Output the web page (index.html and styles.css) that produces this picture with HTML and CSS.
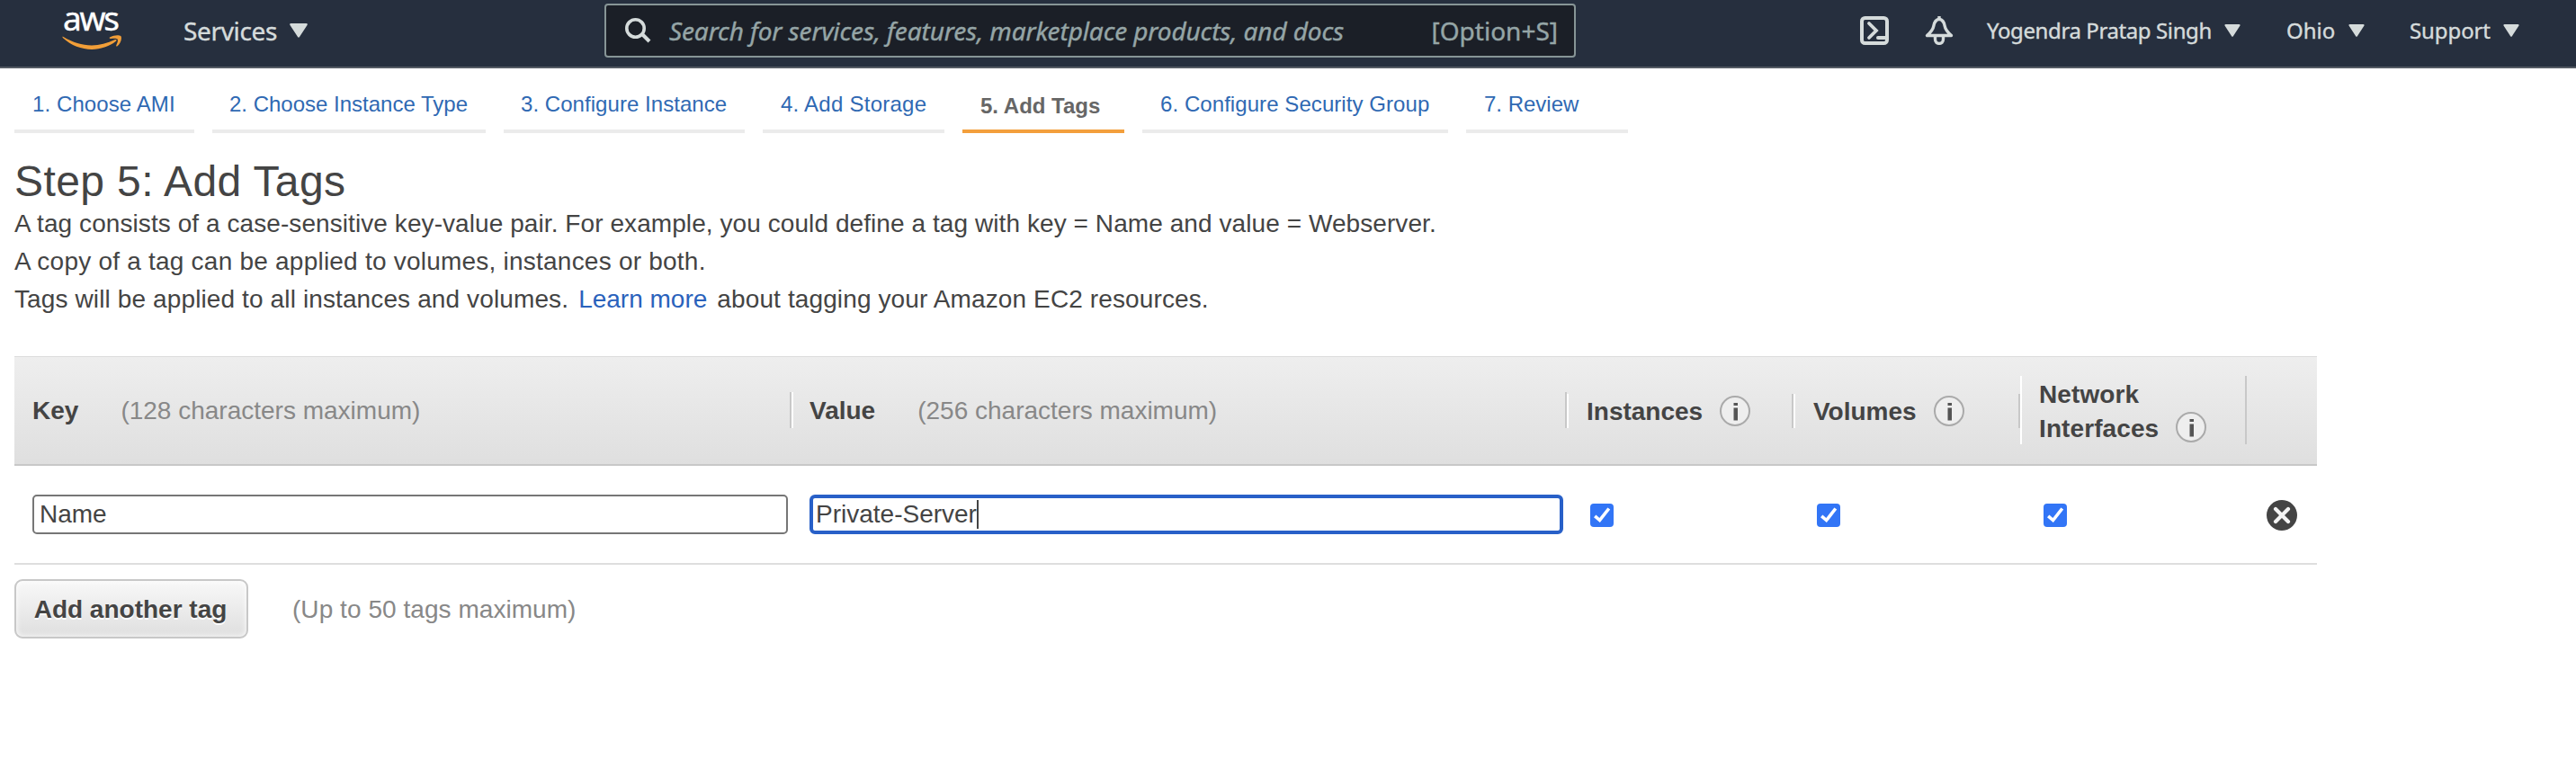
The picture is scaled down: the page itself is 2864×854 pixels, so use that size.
FILE: index.html
```html
<!DOCTYPE html>
<html lang="en">
<head>
<meta charset="utf-8">
<title>Step 5: Add Tags</title>
<link rel="stylesheet" href="styles.css">
</head>
<body>
<header class="topbar">
  <div class="logo">
    <span class="logo-text">aws</span>
    <svg class="logo-smile" width="68" height="18" viewBox="0 0 68 18"><path d="M1.500 2Q0 .8.800 3C18 19 43 20 60 6.800Q61.500 4.500 59 5C39 14.800 20 13 1.500 2Z" fill="#f19e38"/><path d="M53 2.600C58-.400 63.500-.200 65.500 1.200C67 4.500 64.500 10 61.200 12.500Q59.800 13 60.300 11.300C61.500 8.500 62.500 6 61.600 4.600C60 3.200 57 3.800 54 4Q52 3.800 53 2.600Z" fill="#f19e38"/></svg>
  </div>
  <div class="nav-item services"><span class="t services-text">Services</span><svg class="caret-lg" width="20" height="16" viewBox="0 0 20 16"><path d="M1.500 0H18.500Q20.500.300 19.500 2L11 15Q10 16.600 9 15L.500 2Q-.500.300 1.500 0Z" fill="#d5dbdb"/></svg></div>
  <div class="search">
    <svg class="search-icon" width="29" height="28" viewBox="0 0 29 28"><circle cx="11.500" cy="11.500" r="9.700" fill="none" stroke="#d5dbdb" stroke-width="3.600"/><path d="M18.500 17.500L27 26" stroke="#d5dbdb" stroke-width="4"/></svg>
    <span class="t placeholder">Search for services, features, marketplace products, and docs</span>
    <span class="t shortcut">[Option+S]</span>
  </div>
  <svg class="shell-icon" width="32" height="32" viewBox="0 0 32 32" fill="none" stroke="#d5dbdb" stroke-width="4"><rect x="2" y="2" width="28" height="28" rx="3.500"/><path d="M10 8L18 16L10 24" stroke-linecap="round" stroke-width="3.800"/><path d="M20 24H29" stroke-linecap="round"/></svg>
  <svg class="bell-icon" width="32" height="32" viewBox="0 0 32 32" fill="none" stroke="#d5dbdb" stroke-width="3.400" stroke-linejoin="round"><path d="M16 3.200C12 3.800 10.500 6.500 9.800 11C9.200 15 7 17.500 2.500 21.500H29.500C25 17.500 22.800 15 22.200 11C21.500 6.500 20 3.800 16 3.200Z"/><path d="M16 0V4"/><path d="M11.500 22V25.500C11.500 32 20.500 32 20.500 25.500V22"/></svg>
  <div class="nav-item user"><span class="t user-text">Yogendra Pratap Singh</span><svg width="18" height="14" viewBox="0 0 20 16"><path d="M1.500 0H18.500Q20.500.300 19.500 2L11 15Q10 16.600 9 15L.500 2Q-.500.300 1.500 0Z" fill="#d5dbdb"/></svg></div>
  <div class="nav-item region"><span class="t region-text">Ohio</span><svg width="18" height="14" viewBox="0 0 20 16"><path d="M1.500 0H18.500Q20.500.300 19.500 2L11 15Q10 16.600 9 15L.500 2Q-.500.300 1.500 0Z" fill="#d5dbdb"/></svg></div>
  <div class="nav-item support"><span class="t support-text">Support</span><svg width="18" height="14" viewBox="0 0 20 16"><path d="M1.500 0H18.500Q20.500.300 19.500 2L11 15Q10 16.600 9 15L.500 2Q-.500.300 1.500 0Z" fill="#d5dbdb"/></svg></div>
</header>
<nav class="steps">
  <a class="step s1"><span class="t">1. Choose AMI</span></a>
  <a class="step s2"><span class="t">2. Choose Instance Type</span></a>
  <a class="step s3"><span class="t">3. Configure Instance</span></a>
  <a class="step s4"><span class="t">4. Add Storage</span></a>
  <a class="step s5 active"><span class="t">5. Add Tags</span></a>
  <a class="step s6"><span class="t">6. Configure Security Group</span></a>
  <a class="step s7"><span class="t">7. Review</span></a>
</nav>
<main class="content">
  <h1><span class="t">Step 5: Add Tags</span></h1>
  <p class="l1"><span class="t">A tag consists of a case-sensitive key-value pair. For example, you could define a tag with key = Name and value = Webserver.</span></p>
  <p class="l2"><span class="t">A copy of a tag can be applied to volumes, instances or both.</span></p>
  <p class="l3"><span class="t">Tags will be applied to all instances and volumes.</span><a class="t learn">Learn more</a><span class="t">about tagging your Amazon EC2 resources.</span></p>
  <section class="table">
    <div class="row head">
      <div class="cell"><b class="t">Key</b><span class="t hint key-hint">(128 characters maximum)</span><i class="edge edge-r"></i></div>
      <div class="cell"><i class="edge edge-l"></i><b class="t">Value</b><span class="t hint value-hint">(256 characters maximum)</span><i class="edge edge-r"></i></div>
      <div class="cell check-head"><i class="edge edge-l low"></i><b class="t">Instances</b><svg class="info" width="34" height="34" viewBox="0 0 34 34"><circle cx="17" cy="17" r="16" fill="#eee" stroke="#aaa" stroke-width="2"/><path d="M15.500 8h4.500v3h-4.500zM15.500 13.500h4.500v14h-4.500z" fill="#555"/></svg><i class="edge edge-r low"></i></div>
      <div class="cell check-head"><i class="edge edge-l low"></i><b class="t">Volumes</b><svg class="info" width="34" height="34" viewBox="0 0 34 34"><circle cx="17" cy="17" r="16" fill="#eee" stroke="#aaa" stroke-width="2"/><path d="M15.500 8h4.500v3h-4.500zM15.500 13.500h4.500v14h-4.500z" fill="#555"/></svg><i class="edge edge-r low"></i></div>
      <div class="cell check-head net"><i class="edge edge-l tall"></i><div class="net-label"><b class="t">Network</b><div class="net-line"><b class="t">Interfaces</b><svg class="info" width="34" height="34" viewBox="0 0 34 34"><circle cx="17" cy="17" r="16" fill="#eee" stroke="#aaa" stroke-width="2"/><path d="M15.500 8h4.500v3h-4.500zM15.500 13.500h4.500v14h-4.500z" fill="#555"/></svg></div></div><i class="edge edge-r tall"></i></div>
      <div class="cell"></div>
    </div>
    <div class="row body">
      <div class="cell"><div class="field"><span class="t">Name</span></div></div>
      <div class="cell"><div class="field focus"><span class="t">Private-Server</span><i class="cursor"></i></div></div>
      <div class="cell check"><svg width="26" height="26" viewBox="0 0 26 26"><rect width="26" height="26" rx="4" fill="#3275f6"/><path d="M5.200 13.800L10.600 18.500L20.800 5.500" fill="none" stroke="#fff" stroke-width="3.600"/></svg></div>
      <div class="cell check"><svg width="26" height="26" viewBox="0 0 26 26"><rect width="26" height="26" rx="4" fill="#3275f6"/><path d="M5.200 13.800L10.600 18.500L20.800 5.500" fill="none" stroke="#fff" stroke-width="3.600"/></svg></div>
      <div class="cell check"><svg width="26" height="26" viewBox="0 0 26 26"><rect width="26" height="26" rx="4" fill="#3275f6"/><path d="M5.200 13.800L10.600 18.500L20.800 5.500" fill="none" stroke="#fff" stroke-width="3.600"/></svg></div>
      <div class="cell remove"><svg width="34" height="34" viewBox="0 0 34 34"><circle cx="17" cy="17" r="17" fill="#444"/><path d="M10 10L24 24M24 10L10 24" stroke="#f4f4f4" stroke-width="4.200" stroke-linecap="round"/></svg></div>
    </div>
  </section>
  <div class="actions"><button class="add"><span class="t">Add another tag</span></button><span class="t hint limit">(Up to 50 tags maximum)</span></div>
</main>
</body>
</html>
```
FILE: styles.css
```css
* { box-sizing: border-box; }
body { margin: 0; background: #fff; color: #444; font: 28px/42px "Liberation Sans", Arial, sans-serif; }
svg { display: block; flex: none; }
.t { white-space: nowrap; }
.topbar { display: flex; height: 76px; background: #262f3e; border-bottom: 2px solid #545b64; color: #d5dbdb; font-family: "Noto Sans", sans-serif; -webkit-text-stroke: 0.4px currentColor; }
.logo { width: 68px; margin-left: 69px; display: flex; flex-direction: column; }
.logo-text { height: 39px; padding-left: 1px; font-size: 37px; line-height: 40px; letter-spacing: -2.3px; color: #fff; }
.nav-item { display: flex; align-items: center; height: 68px; }
.services { margin-left: 67px; width: 468px; }
.services-text { width: 104px; letter-spacing: -0.35px; }
.caret-lg { margin-left: 14px; }
.search { display: flex; align-items: center; width: 1080px; height: 60px; margin-top: 4px; padding: 0 18px 0 21px; background: #1b1f27; border: 2px solid #879596; border-radius: 4px; color: #95a5a6; }
.placeholder { margin-left: 20px; font-style: italic; letter-spacing: -0.12px; }
.shortcut { margin-left: auto; }
.shell-icon { margin: 18px 0 0 316px; }
.bell-icon { margin: 18px 0 0 40px; }
.user, .region, .support { font-size: 24px; gap: 15px; }
.user { margin-left: 37px; }
.user-text { width: 249px; letter-spacing: -0.4px; }
.region { margin-left: 51px; }
.region-text { width: 54px; }
.support { margin-left: 50px; }
.support-text { width: 89px; letter-spacing: -0.1px; }
.steps { display: flex; gap: 20px; height: 72px; margin-left: 16px; font-size: 24px; }
.step { height: 72px; padding: 19px 0 0 20px; border-bottom: 4px solid #ebebeb; color: #2f69b3; }
.s1 { width: 200px; letter-spacing: 0.1px; }
.s2 { width: 304px; padding-left: 19px; }
.s3 { width: 268px; padding-left: 19px; letter-spacing: 0.05px; }
.s4 { width: 202px; letter-spacing: 0.25px; }
.s5 { width: 180px; }
.s6 { width: 340px; letter-spacing: 0.07px; }
.s7 { width: 180px; }
.step.active { padding-top: 21px; border-color: #f39f3c; color: #666; font-weight: bold; }
.content { padding: 26px 16px 0; }
h1 { margin: 0; height: 54px; font-size: 48px; line-height: 56px; font-weight: normal; letter-spacing: 0.4px; }
p { margin: 0; display: flex; }
.l1 { letter-spacing: 0.075px; }
.l2 { letter-spacing: 0.225px; }
.l3 { letter-spacing: 0.12px; }
.learn { margin: 0 11px; color: #2a62bc; letter-spacing: 0; }
.table { width: 2560px; margin-top: 42px; }
.row { display: grid; grid-template-columns: 864px 862px 252px 252px 252px 78px; }
.cell { position: relative; display: flex; align-items: center; }
.head { height: 122px; border-top: 1px solid #dcdcdc; border-bottom: 2px solid #c8c8c8; background: linear-gradient(#eee, #dfdfdf); }
.head .cell { padding-left: 20px; }
.head .check-head { padding: 3px 0 0 22px; }
.head .net { padding-left: 21px; }
.hint { color: #888; }
.key-hint, .value-hint { margin-left: 47px; }
.info { margin: -2px 0 0 19px; }
.edge { position: absolute; top: 39px; width: 2px; height: 40px; }
.edge-l { left: 0; background: #fff; }
.edge-r { right: 0; background: #c8c8c8; }
.edge.low { top: 41px; height: 38px; }
.edge.tall { top: 21px; height: 76px; }
.net-label { line-height: 38px; letter-spacing: 0.1px; }
.net-line { display: flex; align-items: center; height: 38px; }
.net-line .info { margin-top: -4px; }
.body { height: 110px; border-bottom: 2px solid #dedede; }
.body .cell { padding-left: 20px; }
.field { display: flex; align-items: center; width: 840px; height: 44px; padding-left: 6px; border: 2px solid #767676; border-radius: 5px; }
.focus { width: 838px; padding-left: 3px; border: 4px solid #2860c8; border-radius: 6px; }
.cursor { width: 2px; height: 32px; background: #444; }
.body .check { padding: 2px 0 0 26px; }
.body .remove { padding: 2px 0 0 22px; }
.actions { display: flex; align-items: center; margin-top: 16px; }
.add { width: 260px; height: 66px; padding: 2px 2px 0 0; border: 2px solid #c8c8c8; border-radius: 9px; background: linear-gradient(#f8f8f8, #dfdfdf); box-shadow: inset 0 0 6px #fff; color: #444; font: bold 28px/42px "Liberation Sans", Arial, sans-serif; text-shadow: 0 2px 0 #fff; }
.limit { margin-left: 49px; padding-top: 2px; letter-spacing: 0.05px; }
```
